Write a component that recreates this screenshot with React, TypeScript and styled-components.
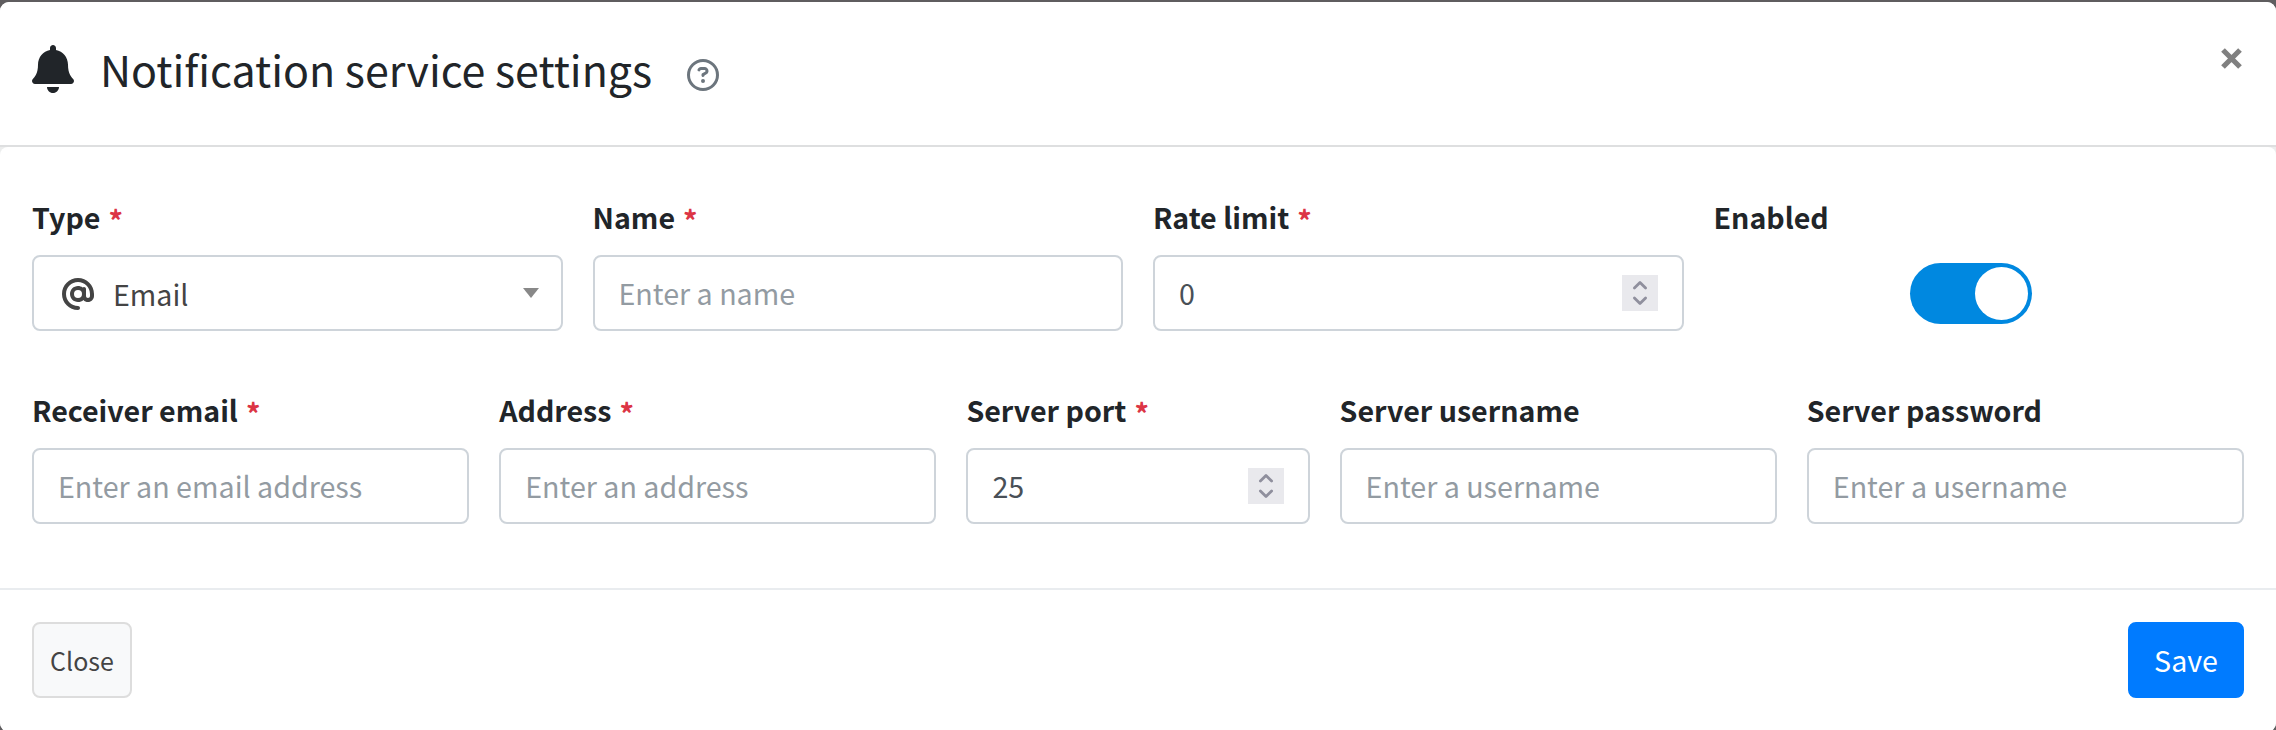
import React from "react";
import styled, { createGlobalStyle } from "styled-components";
import { FaBell } from "react-icons/fa";
import { FaAt, FaRegCircleQuestion } from "react-icons/fa6";

const GlobalStyle = createGlobalStyle`
  *, *::before, *::after { box-sizing: border-box; }
  html, body { margin: 0; height: 730px; overflow: hidden; background: #5f5d5f; }
  body, input, button {
    font-family: "Noto Sans CJK SC", "Noto Sans CJK JP", "Noto Sans", sans-serif;
  }
`;

const Backdrop = styled.div`
  height: 730px;
  padding-top: 2px;
  overflow: hidden;
  background: #5f5d5f;
`;

const Modal = styled.form`
  display: flex;
  flex-direction: column;
  height: 730px;
  background: #eceded;
  border-radius: 9px;
  overflow: hidden;
  color: #212529;
`;

const Header = styled.header`
  display: flex;
  align-items: flex-start;
  height: 145px;
  padding: 43px 34px 0 32px;
  border-bottom: 2px solid #dedfe0;
  background: #fff;
`;

const BellIcon = styled(FaBell)`
  width: 42px;
  height: 48px;
  color: #212529;
`;

const Title = styled.h1`
  height: 52px;
  margin: 0 0 0 26px;
  font-size: 42.95px;
  font-weight: 400;
  line-height: 46px;
  white-space: nowrap;
`;

const HelpIcon = styled(FaRegCircleQuestion)`
  width: 32px;
  height: 32px;
  margin: 14px 0 0 35px;
  color: #6c757d;
`;

const DismissButton = styled.button`
  display: flex;
  margin: 3px 0 0 auto;
  padding: 0;
  border: 0;
  background: none;
  color: #808080;
`;

const Body = styled.main`
  display: flex;
  flex-direction: column;
  gap: 37px;
  height: 441px;
  padding: 51px 32px 0;
  border-radius: 8px 8px 0 0;
  background: #fff;
`;

const Row = styled.div<{ $columns: string }>`
  display: grid;
  grid-template-columns: ${(p) => p.$columns};
  column-gap: 30px;
  height: 156px;

  & + & { height: 128px; }
`;

const Field = styled.div`
  display: flex;
  flex-direction: column;
  min-width: 0;
`;

const Label = styled.label`
  height: 57px;
  font-size: 28.6px;
  font-weight: 700;
  line-height: 38px;
  white-space: nowrap;
`;

const Required = styled.span`
  display: inline-block;
  margin-left: 8px;
  color: #dc3545;
  line-height: 20px;
  vertical-align: -3px;
`;

const Control = styled.div`
  display: flex;
  align-items: center;
  height: 76px;
  padding: 0 24px;
  border: 2px solid #ced4da;
  border-radius: 8px;
  background: #fff;
`;

const TextInput = styled.input`
  flex: 1;
  min-width: 0;
  height: 44px;
  padding: 0;
  border: 0;
  outline: 0;
  background: none;
  color: #495057;
  font-size: 28.65px;
  line-height: 44px;

  &::placeholder { color: #939ba2; opacity: 1; }
`;

const Spinner = styled.span`
  display: flex;
  flex-direction: column;
  align-items: center;
  justify-content: center;
  width: 36px;
  height: 36px;
  background: #e9e9ed;
  color: #8f8f9d;
`;

const AtIcon = styled(FaAt)`
  width: 32px;
  height: 32px;
  margin-top: 2px;
`;

const SelectValue = styled.span`
  flex: 1;
  margin-left: 19px;
  font-size: 28.6px;
  line-height: 44px;
  padding-top: 1px;
`;

const Select = styled(Control)`
  padding: 0 22px 0 28px;
  color: #444;
`;

const ToggleArea = styled.div`
  display: flex;
  align-items: center;
  height: 76px;
  padding-left: 196px;
`;

const Toggle = styled.button`
  display: flex;
  align-items: center;
  justify-content: flex-end;
  width: 122px;
  height: 61px;
  padding: 0 4px;
  border: 0;
  border-radius: 31px;
  background: #0088e0;
`;

const Knob = styled.span`
  width: 53px;
  height: 53px;
  border-radius: 50%;
  background: #fff;
`;

const Footer = styled.footer`
  display: flex;
  align-items: flex-start;
  justify-content: space-between;
  flex: 1;
  padding: 32px 32px 0;
  border-top: 2px solid #e9ecef;
  background: #fff;
`;

const Button = styled.button<{ $primary?: boolean }>`
  width: ${(p) => (p.$primary ? 116 : 100)}px;
  height: 76px;
  padding: 0;
  border: 2px solid ${(p) => (p.$primary ? "#007bff" : "#ddd")};
  border-radius: 8px;
  background: ${(p) => (p.$primary ? "#007bff" : "#f8f9fa")};
  color: ${(p) => (p.$primary ? "#fff" : "#444")};
  font-size: ${(p) => (p.$primary ? 28.6 : 25)}px;
  line-height: 44px;
`;

type InputFieldProps = {
  label: string;
  required?: boolean;
  placeholder?: string;
  value?: string;
  numeric?: boolean;
};

function FieldLabel({ text, required }: { text: string; required?: boolean }) {
  return (
    <Label>
      {text}
      {required && <Required>*</Required>}
    </Label>
  );
}

function InputField({ label, required, placeholder, value, numeric }: InputFieldProps) {
  return (
    <Field>
      <FieldLabel text={label} required={required} />
      <Control>
        <TextInput placeholder={placeholder} defaultValue={value} aria-label={label} />
        {numeric && (
          <Spinner>
            <svg width="16" height="26" viewBox="0 0 16 26" fill="none" stroke="currentColor" strokeWidth="2.8" strokeLinecap="round" strokeLinejoin="round">
              <path d="M2.4 8 8 2.4 13.6 8M2.4 18 8 23.6 13.6 18" />
            </svg>
          </Spinner>
        )}
      </Control>
    </Field>
  );
}

export default function App() {
  return (
    <>
      <GlobalStyle />
      <Backdrop>
        <Modal onSubmit={(e) => e.preventDefault()}>
          <Header>
            <BellIcon />
            <Title>Notification service settings</Title>
            <HelpIcon />
            <DismissButton type="button" aria-label="Close">
              <svg width="21" height="21" viewBox="0 0 21 21" stroke="currentColor" strokeWidth="5.2">
                <path d="M2 2 19 19M19 2 2 19" />
              </svg>
            </DismissButton>
          </Header>
          <Body>
            <Row $columns="repeat(4, 1fr)">
              <Field>
                <FieldLabel text="Type" required />
                <Select>
                  <AtIcon />
                  <SelectValue>Email</SelectValue>
                  <svg width="16" height="10" viewBox="0 0 16 10">
                    <path d="M0 0H16L8 10Z" fill="#888" />
                  </svg>
                </Select>
              </Field>
              <InputField label="Name" required placeholder="Enter a name" />
              <InputField label="Rate limit" required value="0" numeric />
              <Field>
                <FieldLabel text="Enabled" />
                <ToggleArea>
                  <Toggle type="button" role="switch" aria-checked="true" aria-label="Enabled">
                    <Knob />
                  </Toggle>
                </ToggleArea>
              </Field>
            </Row>
            <Row $columns="437fr 437fr 343fr 437fr 437fr">
              <InputField label="Receiver email" required placeholder="Enter an email address" />
              <InputField label="Address" required placeholder="Enter an address" />
              <InputField label="Server port" required value="25" numeric />
              <InputField label="Server username" placeholder="Enter a username" />
              <InputField label="Server password" placeholder="Enter a username" />
            </Row>
          </Body>
          <Footer>
            <Button type="button">Close</Button>
            <Button type="submit" $primary>
              Save
            </Button>
          </Footer>
        </Modal>
      </Backdrop>
    </>
  );
}
